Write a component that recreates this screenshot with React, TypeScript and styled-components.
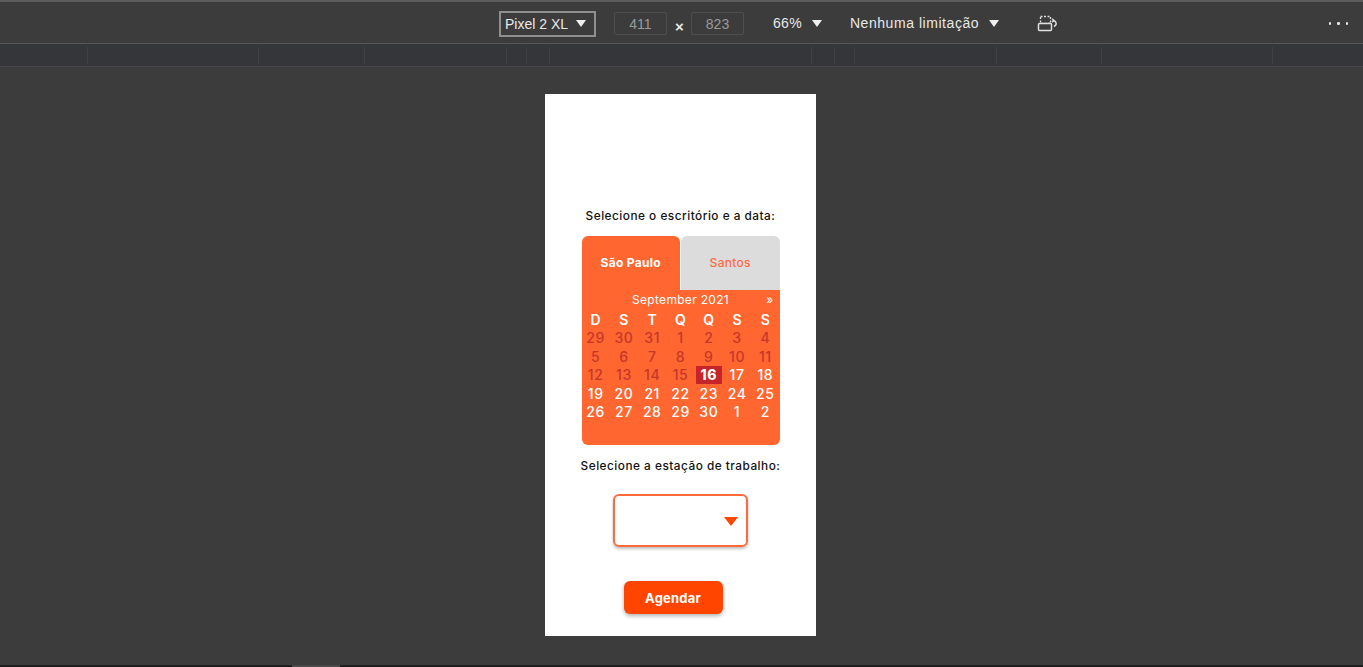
import React from "react";
import styled, { createGlobalStyle } from "styled-components";

const Global = createGlobalStyle`
  html, body { margin: 0; padding: 0; background: #3c3c3c; overflow: hidden; }
  body { height: 667px; }
  * { box-sizing: border-box; }
`;

const Shell = styled.div`
  display: flex;
  flex-direction: column;
  height: 667px;
  background: #3c3c3c;
`;

const TopLine = styled.div`
  height: 3px;
  background: #3c3c3c;
  border-top: 2px solid #5c5c5c;
`;

const Toolbar = styled.div`
  height: 41px;
  display: flex;
  align-items: center;
  padding-left: 499px;
  padding-right: 15px;
  border-bottom: 1px solid #575757;
  font-family: "Liberation Sans", Arial, sans-serif;
  font-size: 14px;
  color: #e8e8e8;
`;

const DeviceSelect = styled.div`
  width: 97px;
  height: 26px;
  border: 2px solid #8f8f8f;
  display: flex;
  align-items: center;
  gap: 8px;
  padding-left: 4px;
  margin-top: 1px;
`;

const Caret = styled.span`
  width: 0;
  height: 0;
  border-left: 5px solid transparent;
  border-right: 5px solid transparent;
  border-top: 7px solid #f0f0f0;
  display: inline-block;
`;

const SizeInput = styled.div<{ $ml: number }>`
  margin-left: ${(p) => p.$ml}px;
  width: 53px;
  height: 23px;
  border: 1px solid #4f4f4f;
  border-radius: 2px;
  color: #9a9a9a;
  display: flex;
  align-items: center;
  justify-content: center;
  margin-top: 1px;
`;

const Times = styled.span`
  margin-left: 8px;
  width: 9px;
  font-size: 15px;
  font-weight: bold;
  color: #e8e8e8;
  margin-top: 6px;
`;

const DropItem = styled.div<{ $ml: number; $ls?: number }>`
  margin-left: ${(p) => p.$ml}px;
  display: flex;
  align-items: center;
  gap: 10px;
  letter-spacing: ${(p) => p.$ls ?? 0}px;
`;

const IconWrap = styled.div`
  margin-left: 38px;
  display: flex;
  align-items: center;
  margin-top: 1px;
`;

const Dots = styled.div`
  margin-left: auto;
  display: flex;
  gap: 6px;
  margin-top: 1px;
`;

const Dot = styled.span`
  width: 2.5px;
  height: 2.5px;
  border-radius: 50%;
  background: #e8e8e8;
`;

const Ruler = styled.div`
  height: 23px;
  background: #35363a;
  border-bottom: 1px solid #474747;
  display: flex;
  padding: 3px 0 2px 0;
`;

const RulerSeg = styled.div<{ $w: number }>`
  width: ${(p) => p.$w}px;
  flex: none;
  border-right: 1px solid #414141;
`;

const Main = styled.div`
  flex: 1;
  display: flex;
  justify-content: center;
  align-items: flex-start;
  padding-top: 27px;
  padding-right: 2px;
`;

const Phone = styled.div`
  width: 271px;
  height: 542px;
  background: #ffffff;
  display: flex;
  flex-direction: column;
  align-items: center;
  padding-top: 114px;
  font-family: Inter, "Open Sans", sans-serif;
`;

const Label = styled.div<{ $mt?: number }>`
  font-size: 11.8px;
  line-height: 16px;
  font-weight: 500;
  color: #111;
  margin-top: ${(p) => p.$mt ?? 0}px;
  letter-spacing: 0.5px;
`;

const Card = styled.div`
  width: 198px;
  margin-top: 12px;
  display: flex;
  flex-direction: column;
`;

const Tabs = styled.div`
  display: flex;
  height: 54px;
`;

const Tab = styled.div<{ $active?: boolean }>`
  flex: 1;
  display: flex;
  align-items: center;
  justify-content: center;
  padding-bottom: 1px;
  border-radius: 6px 6px 0 0;
  background: ${(p) => (p.$active ? "#ff6630" : "#dcdcdc")};
  color: ${(p) => (p.$active ? "#ffffff" : "#ff6a45")};
  font-weight: ${(p) => (p.$active ? 700 : 500)};
  font-size: 12px;
  letter-spacing: 0.3px;
  margin-right: ${(p) => (p.$active ? "1px" : "0")};
`;

const Calendar = styled.div`
  background: #ff6630;
  border-radius: 0 0 6px 6px;
  height: 155px;
  display: flex;
  flex-direction: column;
`;

const CalHeader = styled.div`
  height: 19px;
  display: grid;
  grid-template-columns: 1fr auto 1fr;
  align-items: center;
  color: #fff;
  font-size: 12px;
  letter-spacing: 0.3px;
`;

const Next = styled.span`
  justify-self: end;
  padding-right: 6px;
  font-size: 12px;
`;

const Grid = styled.div`
  display: grid;
  grid-template-columns: repeat(7, 1fr);
  grid-auto-rows: 18.5px;
  padding-top: 1px;
`;

const DayName = styled.div`
  display: flex;
  align-items: center;
  justify-content: center;
  color: #fff;
  font-weight: 600;
  font-size: 14px;
`;

const DateCell = styled.div<{ $dim?: boolean; $sel?: boolean }>`
  display: flex;
  align-items: center;
  justify-content: center;
  font-size: 14px;
  letter-spacing: 0.6px;
  font-weight: ${(p) => (p.$sel ? 800 : 500)};
  color: ${(p) => (p.$dim ? "#c4382b" : "#ffffff")};
  background: ${(p) => (p.$sel ? "#c5252a" : "transparent")};
  margin: ${(p) => (p.$sel ? "0 1px" : "0")};
`;

const SelectBox = styled.div`
  margin-top: 20px;
  width: 135px;
  height: 53px;
  border: 2px solid #ff6a3d;
  border-radius: 6px;
  box-shadow: 0 2px 3px rgba(0, 0, 0, 0.25);
  display: flex;
  align-items: center;
  justify-content: flex-end;
  padding-right: 8px;
`;

const Triangle = styled.span`
  width: 0;
  height: 0;
  border-left: 7px solid transparent;
  border-right: 7px solid transparent;
  border-top: 9px solid #ff4500;
  margin-top: 1px;
`;

const Button = styled.button`
  margin-top: 34px;
  margin-right: 15px;
  width: 99px;
  height: 33px;
  border: none;
  border-radius: 6px;
  background: #ff4500;
  color: #fff;
  font-family: Inter, "Open Sans", sans-serif;
  font-weight: 700;
  font-size: 13px;
  letter-spacing: 0.2px;
  box-shadow: 0 2px 4px rgba(0, 0, 0, 0.3);
  padding: 0;
`;

const BottomBar = styled.div`
  height: 2px;
  background: #1e1e1e;
  display: flex;
  padding-left: 292px;
`;

const Thumb = styled.div`
  width: 48px;
  background: #4a4a4a;
`;

const rulerSegs = [88, 171, 106, 142, 20, 23, 262, 23, 20, 142, 105, 171];

const days = ["D", "S", "T", "Q", "Q", "S", "S"];

type D = { n: number; dim?: boolean; sel?: boolean };
const dates: D[] = [
  ...[29, 30, 31].map((n) => ({ n, dim: true })),
  ...Array.from({ length: 15 }, (_, i) => ({ n: i + 1, dim: true })),
  { n: 16, sel: true },
  ...Array.from({ length: 14 }, (_, i) => ({ n: i + 17 })),
  { n: 1 },
  { n: 2 },
];

const RotateIcon = () => (
  <svg width="22" height="17" viewBox="0 0 22 17" fill="none">
    <rect x="3.5" y="1.5" width="10" height="7" stroke="#e0e0e0" strokeWidth="1.3" strokeDasharray="2 1.5" />
    <rect x="1.5" y="8.5" width="13" height="7" rx="1" stroke="#e0e0e0" strokeWidth="1.5" fill="#3c3c3c" />
    <path d="M15.5 5.5 C19.5 5.5 20.5 10 17 11.5" stroke="#e0e0e0" strokeWidth="1.4" fill="none" />
    <path d="M15 3.8 L17 5.5 L15 7.2" stroke="#e0e0e0" strokeWidth="1.3" fill="none" />
  </svg>
);

export default function App() {
  return (
    <Shell>
      <Global />
      <TopLine />
      <Toolbar>
        <DeviceSelect>
          <span>Pixel 2 XL</span>
          <Caret />
        </DeviceSelect>
        <SizeInput $ml={18}>411</SizeInput>
        <Times>×</Times>
        <SizeInput $ml={7}>823</SizeInput>
        <DropItem $ml={29} $ls={0.3}>
          <span>66%</span>
          <Caret />
        </DropItem>
        <DropItem $ml={28} $ls={0.55}>
          <span>Nenhuma limitação</span>
          <Caret />
        </DropItem>
        <IconWrap>
          <RotateIcon />
        </IconWrap>
        <Dots>
          <Dot />
          <Dot />
          <Dot />
        </Dots>
      </Toolbar>
      <Ruler>
        {rulerSegs.map((w, i) => (
          <RulerSeg key={i} $w={w} />
        ))}
      </Ruler>
      <Main>
        <Phone>
          <Label>Selecione o escritório e a data:</Label>
          <Card>
            <Tabs>
              <Tab $active>São Paulo</Tab>
              <Tab>Santos</Tab>
            </Tabs>
            <Calendar>
              <CalHeader>
                <span />
                <span>September 2021</span>
                <Next>»</Next>
              </CalHeader>
              <Grid>
                {days.map((d, i) => (
                  <DayName key={"d" + i}>{d}</DayName>
                ))}
                {dates.map((d, i) => (
                  <DateCell key={i} $dim={d.dim} $sel={d.sel}>
                    {d.n}
                  </DateCell>
                ))}
              </Grid>
            </Calendar>
          </Card>
          <Label $mt={13}>Selecione a estação de trabalho:</Label>
          <SelectBox>
            <Triangle />
          </SelectBox>
          <Button>Agendar</Button>
        </Phone>
      </Main>
      <BottomBar>
        <Thumb />
      </BottomBar>
    </Shell>
  );
}
